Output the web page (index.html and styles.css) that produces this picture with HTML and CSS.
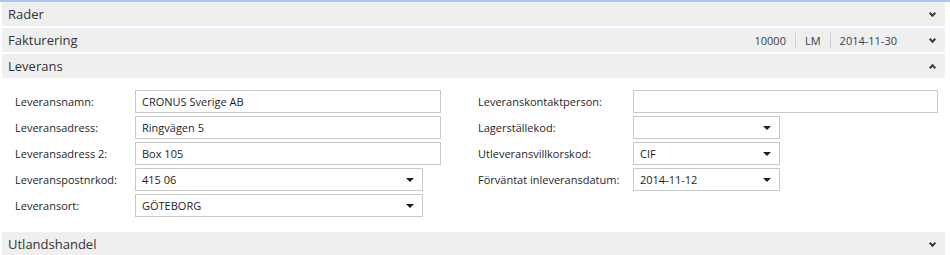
FILE: index.html
```html
<!DOCTYPE html>
<html>
<head>
<meta charset="utf-8">
<link rel="stylesheet" href="styles.css">
</head>
<body>
<div class="page">
  <div class="fasttab">
    <span class="title">Rader</span>
    <span class="chev down"></span>
  </div>
  <div class="fasttab">
    <span class="title">Fakturering</span>
    <span class="summary">
      <span class="sv">10000</span><span class="sep"></span><span class="sv">LM</span><span class="sep"></span><span class="sv">2014-11-30</span>
    </span>
    <span class="chev down"></span>
  </div>
  <div class="fasttab">
    <span class="title">Leverans</span>
    <span class="chev up"></span>
  </div>
  <div class="content">
    <div class="col left">
      <div class="row"><span class="lbl">Leveransnamn:</span><span class="field wide">CRONUS Sverige AB</span></div>
      <div class="row"><span class="lbl">Leveransadress:</span><span class="field wide">Ringvägen 5</span></div>
      <div class="row"><span class="lbl">Leveransadress 2:</span><span class="field wide">Box 105</span></div>
      <div class="row"><span class="lbl">Leveranspostnrkod:</span><span class="field drop mid">415 06<span class="arrow"></span></span></div>
      <div class="row"><span class="lbl">Leveransort:</span><span class="field drop mid">GÖTEBORG<span class="arrow"></span></span></div>
    </div>
    <div class="col right">
      <div class="row"><span class="lbl">Leveranskontaktperson:</span><span class="field wide2"></span></div>
      <div class="row"><span class="lbl">Lagerställekod:</span><span class="field drop short"><span class="arrow"></span></span></div>
      <div class="row"><span class="lbl">Utleveransvillkorskod:</span><span class="field drop short">CIF<span class="arrow"></span></span></div>
      <div class="row"><span class="lbl">Förväntat inleveransdatum:</span><span class="field drop short">2014-11-12<span class="arrow"></span></span></div>
    </div>
  </div>
  <div class="fasttab last">
    <span class="title">Utlandshandel</span>
    <span class="chev down"></span>
  </div>
</div>
</body>
</html>
```

FILE: styles.css
```css
html, body {
  margin: 0;
  padding: 0;
  background: #ffffff;
}
body {
  font-family: "Open Sans", "DejaVu Sans", sans-serif;
  color: #262626;
  width: 950px;
  height: 255px;
  overflow: hidden;
}
.page {
  border-top: 2px solid #a9c8ec;
  padding: 0 5px 0 2px;
}
.fasttab {
  display: flex;
  align-items: center;
  height: 24px;
  margin-bottom: 2px;
  background: #efefef;
  padding: 0 9px 0 6px;
}
.fasttab.last {
  margin-bottom: 0;
}
.title {
  flex: 1;
  font-size: 13px;
  color: #333333;
}
.summary {
  display: flex;
  align-items: center;
  font-size: 11px;
  color: #404040;
  margin-right: 24px;
}
.sv {
  padding: 0 9px;
}
.sep {
  width: 1px;
  height: 15px;
  background: #d0d0d0;
}
.chev {
  width: 3px;
  height: 3px;
  border-right: 2px solid #3a3a3a;
  border-bottom: 2px solid #3a3a3a;
  margin-right: 1px;
}
.chev.down {
  transform: translateY(-1px) rotate(45deg);
}
.chev.up {
  transform: translateY(1px) rotate(-135deg);
}
.content {
  display: flex;
  padding: 10px 0 13px 13px;
  box-sizing: border-box;
  height: 152px;
}
.col {
  display: flex;
  flex-direction: column;
  gap: 3px;
}
.left {
  width: 463px;
}
.row {
  display: flex;
  align-items: center;
  height: 23px;
}
.lbl {
  font-size: 11px;
  color: #262626;
}
.left .lbl {
  width: 120px;
}
.right .lbl {
  width: 155px;
}
.field {
  position: relative;
  box-sizing: border-box;
  height: 23px;
  border: 1px solid #c8c8c8;
  font-size: 11px;
  line-height: 21px;
  padding: 0 6px;
  color: #1e1e1e;
  background: #fff;
}
.wide { width: 306px; }
.wide2 { width: 305px; }
.mid { width: 288px; }
.short { width: 147px; }
.arrow {
  position: absolute;
  right: 8px;
  top: 9px;
  width: 0;
  height: 0;
  border-left: 4px solid transparent;
  border-right: 4px solid transparent;
  border-top: 4px solid #1e1e1e;
}
```
